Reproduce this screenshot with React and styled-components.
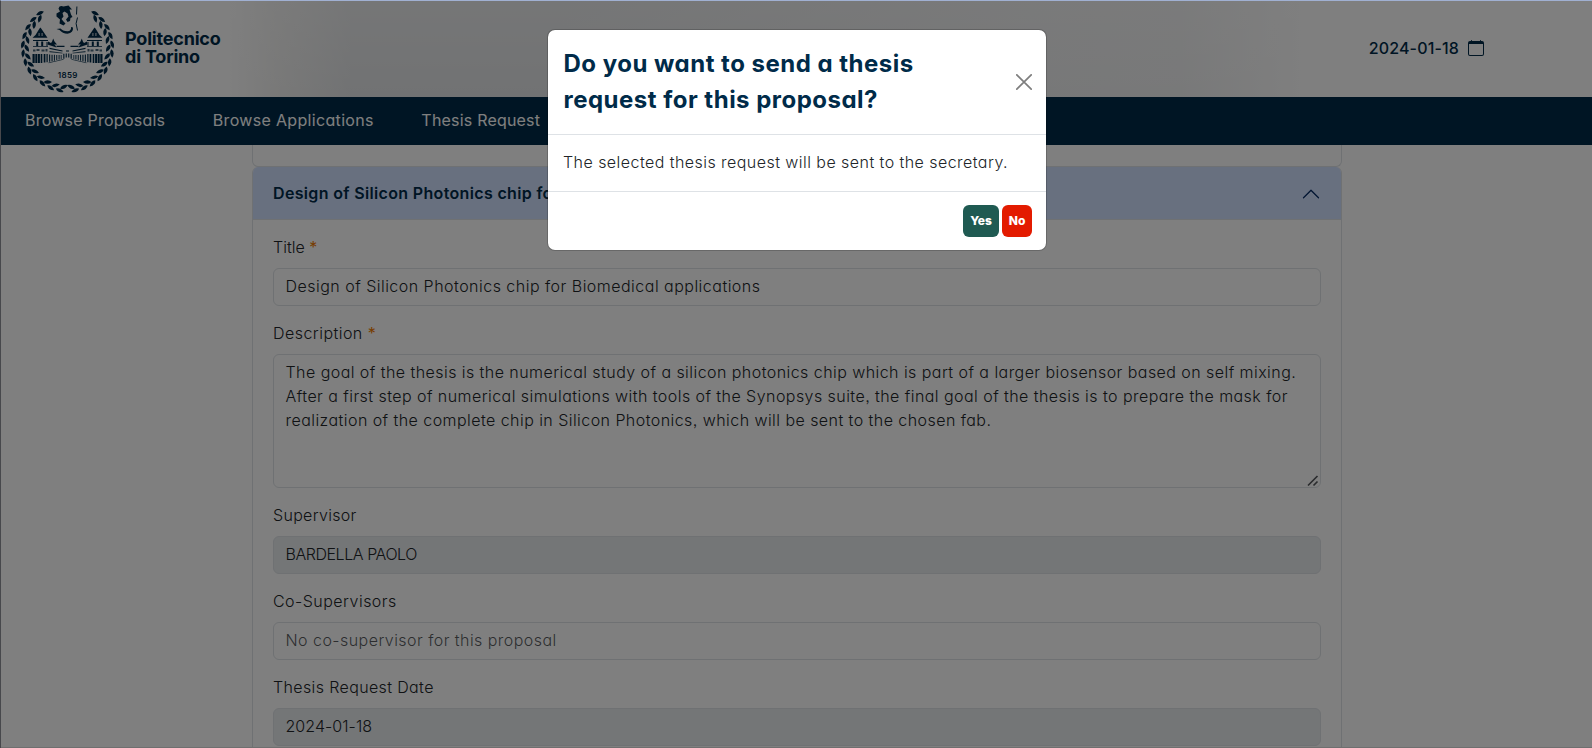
import React from "react";
import styled, { createGlobalStyle } from "styled-components";
import { BsCalendar, BsChevronUp } from "react-icons/bs";

const navy = "#002b49";
const line = "#dee2e6";

const GlobalStyle = createGlobalStyle`
  *, *::before, *::after { box-sizing: border-box; }
  html, body { margin: 0; height: 100%; overflow: hidden; }
  body {
    font-family: Inter, "Open Sans", sans-serif;
    font-feature-settings: "cv11", "ss03";
    font-size: 16px;
    font-weight: 300;
    line-height: 24px;
    color: #212529;
    background: #fff;
  }
  input, textarea, button { font: inherit; font-feature-settings: inherit; color: inherit; }
`;

const Window = styled.div`
  height: 748px;
  border-top: 1px solid #a0b0d2;
  border-left: 1px solid #47484c;
  display: flex;
  position: relative;
`;

const Page = styled.div`
  flex: 1;
  min-width: 0;
  display: flex;
  flex-direction: column;
  overflow: hidden;
  border-bottom: 1px solid #dedede;
`;

const Header = styled.header`
  flex: none;
  height: 96px;
  padding: 0 108px 0 18px;
  display: flex;
  align-items: center;
  justify-content: space-between;
  color: ${navy};
  background:
    linear-gradient(to bottom, rgba(255, 255, 255, 0.3), rgba(255, 255, 255, 0)),
    linear-gradient(to right, #fff 225px, #f2f2f1 275px, #e3e5e7 350px, #e3e5e7 560px, #eff0f1 1030px, #f1f2f3 1180px, #fff 1310px);
`;

const Brand = styled.div`
  display: flex;
  align-items: center;
  gap: 10px;
`;

const BrandName = styled.div`
  font-size: 18px;
  font-weight: 700;
  letter-spacing: -0.2px;
  line-height: 18px;
  padding-bottom: 2px;
`;

const Today = styled.div`
  display: flex;
  align-items: center;
  gap: 9px;
  font-weight: 500;
  letter-spacing: 0.15px;
  padding-bottom: 2px;
`;

const Nav = styled.nav`
  flex: none;
  height: 48px;
  padding: 0 24px 2px;
  display: flex;
  align-items: center;
  gap: 47.5px;
  background: ${navy};
  color: #fff;
  font-weight: 400;
`;

const NavLink = styled.a`
  letter-spacing: ${(p) => p.$track}px;
`;

const Content = styled.main`
  flex: 1;
  min-height: 0;
  width: 1090px;
  margin-left: 251px;
  display: flex;
  flex-direction: column;
`;

const PreviousItem = styled.div`
  flex: none;
  height: 22px;
  border: 1px solid ${line};
  border-top: 0;
  border-radius: 0 0 6px 6px;
`;

const Item = styled.section`
  flex: none;
  border: 1px solid ${line};
  border-top: 0;
  border-radius: 6px 6px 0 0;
  overflow: hidden;
`;

const ItemHeader = styled.div`
  height: 53px;
  padding: 0 20px;
  display: flex;
  align-items: center;
  justify-content: space-between;
  background: #d1e0ff;
  box-shadow: inset 0 -1px 0 ${line};
  color: ${navy};
  font-weight: 600;
  letter-spacing: 0.34px;
`;

const ItemTitle = styled.span`
  padding-bottom: 2px;
`;

const Form = styled.form`
  padding: 15px 20px;
  display: flex;
  flex-direction: column;
  gap: 15px;
`;

const Field = styled.div`
  display: flex;
  flex-direction: column;
  gap: 9px;
`;

const Label = styled.label`
  letter-spacing: ${(p) => p.$track}px;
`;

const Required = styled.span`
  color: #ef7b00;
  font-weight: 400;
`;

const Input = styled.input`
  height: 38px;
  padding: 5px 12px 7px 11.5px;
  border: 1px solid ${line};
  border-radius: 6px;
  background: ${(p) => (p.$muted ? "#e9ecef" : "#fff")};
  letter-spacing: ${(p) => p.$track}px;
  &::placeholder { color: rgba(33, 37, 41, 0.75); }
`;

const TextAreaFrame = styled.div`
  position: relative;
  display: flex;
`;

const TextArea = styled.textarea`
  flex: 1;
  height: 134px;
  padding: 5px 12px 7px 11.5px;
  border: 1px solid ${line};
  border-radius: 6px;
  background: #fff;
  letter-spacing: 0.445px;
  resize: none;
  overflow: hidden;
`;

const Grip = styled.svg`
  position: absolute;
  right: 2px;
  bottom: 1px;
`;

const Backdrop = styled.div`
  position: absolute;
  inset: 0;
  background: rgba(0, 0, 0, 0.5);
`;

const Modal = styled.div`
  position: absolute;
  top: 28px;
  left: 546px;
  width: 500px;
  border: 1px solid rgba(0, 0, 0, 0.175);
  border-radius: 8px;
  background: #fff;
  background-clip: padding-box;
`;

const ModalHeader = styled.div`
  padding: 16px 14px 16px 15.5px;
  border-bottom: 1px solid ${line};
  display: flex;
  align-items: center;
  justify-content: space-between;
`;

const ModalTitle = styled.div`
  font-size: 24px;
  font-weight: 700;
  line-height: 36px;
  letter-spacing: 0.49px;
  color: ${navy};
`;

const CloseButton = styled.button`
  display: flex;
  padding: 0;
  border: 0;
  background: none;
  opacity: 0.5;
`;

const ModalBody = styled.div`
  padding: 15px 15px 17px;
  letter-spacing: 0.45px;
`;

const ModalFooter = styled.div`
  height: 59px;
  padding: 0 14px;
  border-top: 1px solid ${line};
  display: flex;
  align-items: center;
  justify-content: flex-end;
  gap: 3px;
`;

const ActionButton = styled.button`
  height: 32px;
  width: ${(p) => p.$width}px;
  padding: 0;
  border: 0;
  border-radius: 6px;
  background: ${(p) => p.$color};
  color: #fff;
  font-size: 12px;
  font-weight: 800;
`;

const Year = styled.text`
  font-size: 8px;
  font-weight: 600;
  letter-spacing: 0.3px;
`;

// One side of the laurel wreath: paired leaves along an arc from the top down to the stem.
const leaves = Array.from({ length: 12 }, (_, i) => {
  const deg = 38 + i * 12;
  const at = (r, d) => {
    const a = (d * Math.PI) / 180;
    return [r * 1.03 * Math.sin(a), -r * Math.cos(a)];
  };
  const [ox, oy] = at(43.4, deg);
  const [ix, iy] = at(39.4, deg + 5);
  return { ox, oy, ix, iy, deg };
});

const leaf = "M-4.2 0 Q-.8 -3.8 4.2 0 Q-.5 3.2 -4.2 0Z";

const Branch = () => (
  <g>
    {leaves.map((l) => (
      <g key={l.deg}>
        <path d={leaf} transform={`translate(${l.ox} ${l.oy}) rotate(${l.deg - 14})`} />
        <path d={leaf} transform={`translate(${l.ix} ${l.iy}) rotate(${l.deg + 34})`} />
      </g>
    ))}
  </g>
);

const Wing = () => (
  <g>
    <path d="M-28 -19 L-27 -20 L-20 -9.8 L-35 -9.8 L-32 -12.5Z" />
    <path d="M-29 -14.5h1.2v3h-1.2z M-26 -14.5h1.2v3h-1.2z" fill="#fff" opacity=".7" />
    <path d="M-34.5 -7.5h15v1.1h-15z M-31.3 -6h2v5h-2z M-26.3 -6h2v5h-2z M-21 -5.5h1v4h-1z M-34.5 -1.6h15v.9h-15z" />
    <path d="M-34.5 2h2.5v2h-2.5z M-31 1.5h3v2h-3z M-26 2h3v2h-3z M-22 1.5h2v2.5h-2z" opacity=".7" />
    <path d="M-35 6.5h2.2v9h-2.2z M-32.2 6.5h1.8v9h-1.8z M-29.8 6.5h2.2v9h-2.2z M-26.8 6.5h1.6v9h-1.6z M-23.8 6.5h1.7v8.5h-1.7z M-21 6.5h1.2v8.2h-1.2z M-18.4 7h1.1v7.2h-1.1z M-16 7.2h1.1v6.5h-1.1z M-13.6 7.2h1v6h-1z" />
    <path d="M-19.5 -6 L-12.5 -2.5 L-11 0 L-20 -3Z M-14.3 -9 L-13 -6 L-10.5 -3 L-17.5 -3 L-15.4 -6Z M-11 -1.8 H-3 V-.6 H-11Z M-18 .2 L-5 3 V4 L-18 1.6Z" />
    <path d="M-18 3.6 L-5 5.2 V6 L-18 4.8Z M-11.4 7.4h1.2v5h-1.2z M-9 7.4h1.2v4.6h-1.2z M-6.8 7.4h1v4.2h-1z M-4.4 6.2h1.4v5h-1.4z M-19 15 L-4 11.5 V12.2 L-19 15.8Z" opacity=".8" />
  </g>
);

const Crest = () => (
  <svg width="96" height="94" viewBox="-48.5 -45.5 96 94" fill={navy} aria-hidden="true">
    <Branch />
    <g transform="scale(-1 1)"><Branch /></g>
    <Wing />
    <g transform="scale(-1 1)"><Wing /></g>
    <path d="M-1.5 3h3v1h-3z M-1.8 6h1.1v4h-1.1z M.7 6h1.1v4h-1.1z" />
    <path d="M-9 -39 Q-8 -42.5 -4 -41 L1 -42 L4.5 -38 L2 -38 L3.5 -33 L5 -30.5 L3 -29.5 L2.5 -26.5 L0 -25.5 L-1.5 -28 L1 -31 L0 -34 L-3 -36 L-5 -34.5 L-4 -31 L-6 -28.5 L-4 -26 L-2 -24 L-4 -22 L-8 -24 L-7.5 -28 L-11 -31 L-11 -34 L-7.5 -36Z" />
    <path d="M-11 -18.5 L-8 -17.5 Q-5 -14 0 -13.8 Q6 -14.5 5.5 -20 L3.5 -20.5 Q4 -16.5 0 -16.2 Q-5 -16.5 -7 -19Z" />
    <path d="M9.4 -41 L9 -33 M10 -30 L8.6 -24 L10 -17" fill="none" stroke={navy} strokeWidth="1" />
    <Year x=".2" y="30" textAnchor="middle">1859</Year>
  </svg>
);

const description =
  "The goal of the thesis is the numerical study of a silicon photonics chip which is part of a larger biosensor based on self mixing.\n" +
  "After a first step of numerical simulations with tools of the Synopsys suite, the final goal of the thesis is to prepare the mask for\n" +
  "realization of the complete chip in Silicon Photonics, which will be sent to the chosen fab.";

export default function App() {
  return (
    <Window>
      <GlobalStyle />
      <Page>
        <Header>
          <Brand>
            <Crest />
            <BrandName>Politecnico<br />di Torino</BrandName>
          </Brand>
          <Today>
            2024-01-18
            <BsCalendar size={16} />
          </Today>
        </Header>
        <Nav>
          <NavLink $track={0.24}>Browse Proposals</NavLink>
          <NavLink $track={0.33}>Browse Applications</NavLink>
          <NavLink $track={0.2}>Thesis Request</NavLink>
        </Nav>
        <Content>
          <PreviousItem />
          <Item>
            <ItemHeader>
              <ItemTitle>Design of Silicon Photonics chip for Biomedical applications</ItemTitle>
              <BsChevronUp size={20} color="#052c65" />
            </ItemHeader>
            <Form>
              <Field>
                <Label $track={0}>Title <Required>*</Required></Label>
                <Input $track={0.48} readOnly value="Design of Silicon Photonics chip for Biomedical applications" />
              </Field>
              <Field>
                <Label $track={0.46}>Description <Required>*</Required></Label>
                <TextAreaFrame>
                  <TextArea readOnly value={description} />
                  <Grip width="12" height="12" viewBox="0 0 12 12" stroke="#55585c" strokeWidth="1.7" aria-hidden="true">
                    <path d="M1 10.5 10.5 1M6.5 10.5 10.5 6.5" />
                  </Grip>
                </TextAreaFrame>
              </Field>
              <Field>
                <Label $track={0.3}>Supervisor</Label>
                <Input $track={-0.45} $muted readOnly value="BARDELLA PAOLO" />
              </Field>
              <Field>
                <Label $track={0.47}>Co-Supervisors</Label>
                <Input $track={0.45} readOnly placeholder="No co-supervisor for this proposal" />
              </Field>
              <Field>
                <Label $track={0.37}>Thesis Request Date</Label>
                <Input $track={0.05} $muted readOnly value="2024-01-18" />
              </Field>
            </Form>
          </Item>
        </Content>
      </Page>
      <Backdrop />
      <Modal role="dialog">
        <ModalHeader>
          <ModalTitle>Do you want to send a thesis<br />request for this proposal?</ModalTitle>
          <CloseButton aria-label="Close">
            <svg width="16" height="16" viewBox="0 0 16 16" fill="none" stroke="#000" strokeWidth="1.7" strokeLinecap="round">
              <path d="M.8 .8 15.2 15.2M15.2 .8 .8 15.2" />
            </svg>
          </CloseButton>
        </ModalHeader>
        <ModalBody>The selected thesis request will be sent to the secretary.</ModalBody>
        <ModalFooter>
          <ActionButton $width={36} $color="#1f5a52">Yes</ActionButton>
          <ActionButton $width={30} $color="#e31b00">No</ActionButton>
        </ModalFooter>
      </Modal>
    </Window>
  );
}
